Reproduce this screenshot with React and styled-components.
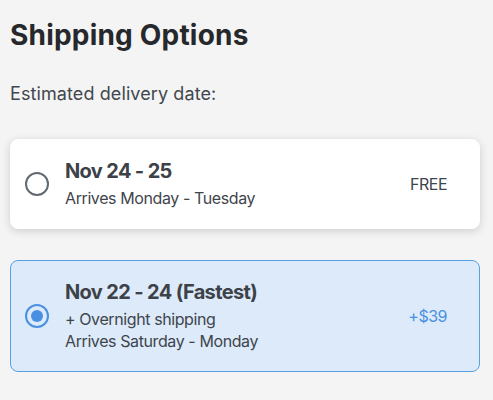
import React, { useState } from 'react';
import styled, { createGlobalStyle } from 'styled-components';

const GlobalStyle = createGlobalStyle`
    body {
        margin: 0;
        background: #f4f4f4;
        font-family: 'Inter', 'Noto Sans', sans-serif;
    }
`;

const Page = styled.div`
    padding: 18px 13px 20px 10px;
`;

const Title = styled.h1`
    margin: 0;
    font-size: 28px;
    line-height: 34px;
    font-weight: 700;
    letter-spacing: 0.2px;
    color: #26282b;
`;

const Subtitle = styled.p`
    margin: 28px 0 32px;
    font-size: 18px;
    line-height: 27px;
    letter-spacing: 0.1px;
    color: #41474e;
`;

const Options = styled.div`
    display: flex;
    flex-direction: column;
    gap: 31px;
`;

const Card = styled.label`
    display: flex;
    align-items: center;
    gap: 16px;
    padding: 19px 32px 19px 14px;
    border-radius: 8px;
    border: 1px solid ${p => (p.$selected ? '#5a9fe4' : '#ffffff')};
    background: ${p => (p.$selected ? '#dceafa' : '#ffffff')};
    box-shadow: ${p => (p.$selected ? 'none' : '0 2px 8px rgba(0, 0, 0, 0.16)')};
    cursor: pointer;
`;

const Radio = styled.span`
    flex: none;
    box-sizing: border-box;
    width: 24px;
    height: 24px;
    border-radius: 50%;
    border: 2px solid ${p => (p.$checked ? '#4a90e2' : '#5f6a74')};
    display: flex;
    align-items: center;
    justify-content: center;

    &::after {
        content: '';
        display: ${p => (p.$checked ? 'block' : 'none')};
        width: 12px;
        height: 12px;
        border-radius: 50%;
        background: #4a90e2;
    }
`;

const Info = styled.div`
    flex: 1;
    display: flex;
    flex-direction: column;
`;

const Dates = styled.div`
    font-size: 20px;
    line-height: 24px;
    font-weight: 700;
    letter-spacing: -0.65px;
    color: #3d4248;
    margin-bottom: 4px;
`;

const Line = styled.div`
    font-size: 16px;
    line-height: 22px;
    letter-spacing: -0.4px;
    color: #3f454c;
`;

const Price = styled.div`
    font-size: 16px;
    letter-spacing: -0.5px;
    color: ${p => (p.$accent ? '#4a90e2' : '#3f454c')};
`;

const options = [
    { id: 'std', dates: 'Nov 24 - 25', lines: ['Arrives Monday - Tuesday'], price: 'FREE' },
    { id: 'fast', dates: 'Nov 22 - 24 (Fastest)', lines: ['+ Overnight shipping', 'Arrives Saturday - Monday'], price: '+$39' },
];

export default function App() {
    const [selected, setSelected] = useState('fast');

    return (
        <Page>
            <GlobalStyle />
            <Title>Shipping Options</Title>
            <Subtitle>Estimated delivery date:</Subtitle>
            <Options>
                {options.map(o => {
                    const on = o.id === selected;
                    return (
                        <Card key={o.id} $selected={on} onClick={() => setSelected(o.id)}>
                            <Radio $checked={on} />
                            <Info>
                                <Dates>{o.dates}</Dates>
                                {o.lines.map(l => <Line key={l}>{l}</Line>)}
                            </Info>
                            <Price $accent={on}>{o.price}</Price>
                        </Card>
                    );
                })}
            </Options>
        </Page>
    );
}
